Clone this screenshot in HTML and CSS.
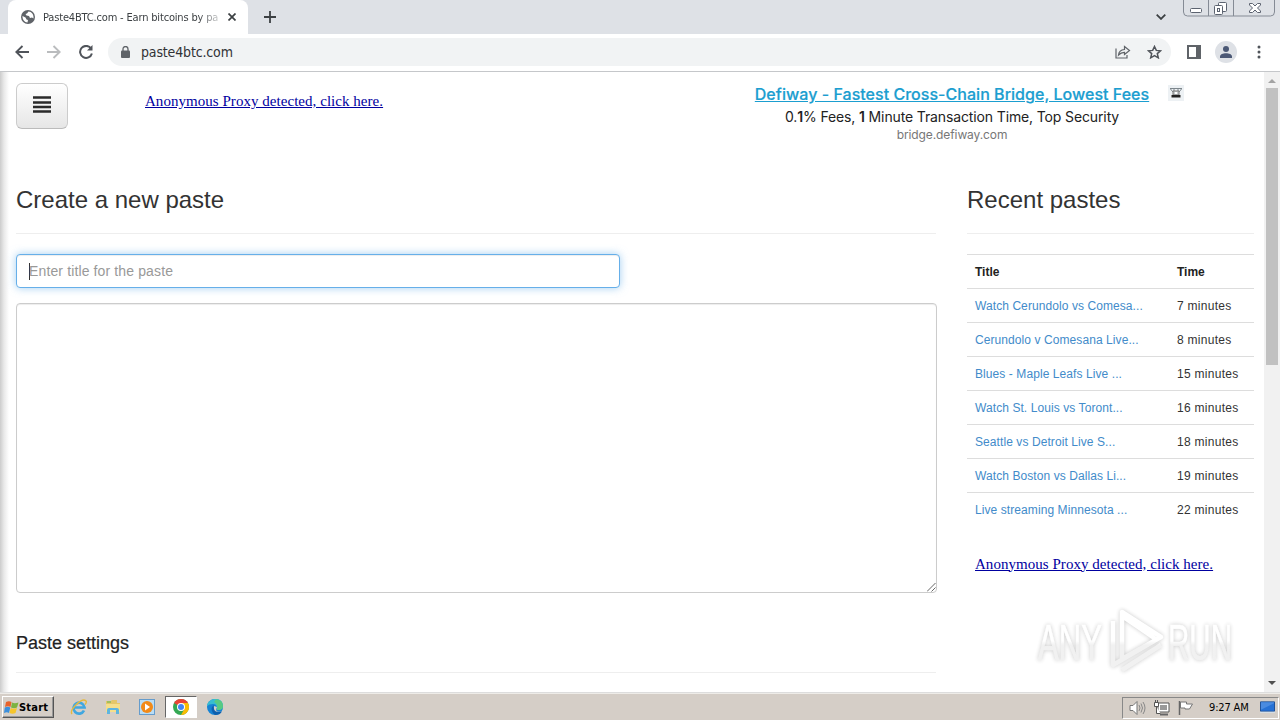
FILE: index.html
```html
<!DOCTYPE html>
<html lang="en">
<head>
<meta charset="utf-8">
<title>Paste4BTC.com - Earn bitcoins by pasting</title>
<link rel="stylesheet" href="styles.css">
</head>
<body>
<div class="screen">
  <header class="tabstrip">
    <div class="tab">
      <svg class="globe" width="14" height="14" viewBox="0 0 14 14"><circle cx="7" cy="7" r="7" fill="#5f6368"/><path d="M1.500 6l3 1.500 1 2 1.500.5-.5 2.500C3.500 12.500 1.300 9.500 1.500 6zM7.500 1.500L6 3.500 4.500 4l1 1.500L8 6l1 2 2-.5 1.500 1C13 4.500 10.500 1.500 7.500 1.500z" fill="#fff"/></svg>
      <span class="tab-title">Paste4BTC.com - Earn bitcoins by pa</span>
      <svg class="tab-close" width="8" height="8" viewBox="0 0 8 8"><path d="M.5.5l7 7M7.500.5l-7 7" stroke="#3c4043" stroke-width="1.700"/></svg>
    </div>
    <svg class="plus" width="12" height="12" viewBox="0 0 12 12"><path d="M6 0v12M0 6h12" stroke="#3c4043" stroke-width="1.800"/></svg>
    <svg class="chevron" width="10" height="6" viewBox="0 0 10 6"><path d="M.7.700L5 4.900 9.300.700" fill="none" stroke="#3c4043" stroke-width="1.800"/></svg>
    <svg class="window-buttons" width="94" height="18" viewBox="0 0 94 18"><path d="M1.500 0v12q0 4 4 4h83q4 0 4-4V0M26.500 0v16M51.500 0v16" fill="none" stroke="#858b95"/><g fill="#fff" stroke="#5c6370"><rect x="8.500" y="8.500" width="11" height="4" rx="1"/><rect x="36.500" y="2.500" width="8" height="9" rx="1"/><rect x="32.500" y="5.500" width="8" height="9" rx="1"/><rect x="35.500" y="8.500" width="2" height="3"/><path d="M67.500 3.500h3l2.500 2.500 2.500-2.500h3v1.500L75.500 8l3 3v1.500h-3L73 10l-2.500 2.500h-3V11l3-3-3-3z"/></g></svg>
  </header>
  <div class="toolbar">
    <svg class="back" width="14" height="14" viewBox="0 0 14 14"><path d="M14 7H1.500M7.500 1L1.300 7l6.200 6" fill="none" stroke="#50545a" stroke-width="1.900"/></svg>
    <svg class="forward" width="14" height="14" viewBox="0 0 14 14"><path d="M0 7h12.500M6.500 1l6.200 6-6.200 6" fill="none" stroke="#babcbe" stroke-width="1.900"/></svg>
    <svg class="reload" width="14" height="14" viewBox="0 0 14 14"><path d="M12 3.400A6 6 0 1 0 12.900 8.500" fill="none" stroke="#50545a" stroke-width="2"/><path d="M13.500 0v5.500H8z" fill="#50545a"/></svg>
    <div class="omnibox">
      <svg class="lock" width="9" height="12" viewBox="0 0 9 12"><rect y="4.500" width="9" height="7.500" rx="1" fill="#5f6368"/><path d="M2 5V3a2.500 2.500 0 0 1 5 0v2" fill="none" stroke="#5f6368" stroke-width="1.300"/></svg>
      <span class="url">paste4btc.com</span>
      <svg class="share" width="16" height="14" viewBox="0 0 16 14"><path d="M1 3.500v9.500h11v-3M3.500 10q.500-5 6-5.500V1.500L14.500 5.500l-5 4V7.300Q6 7.200 3.500 10z" fill="none" stroke="#5f6368" stroke-width="1.200"/></svg>
      <svg class="star" width="15" height="14" viewBox="0 0 15 14"><path d="M7.500 1.500l1.800 3.900 4.200.4-3.200 2.800 1 4.200-3.800-2.200-3.800 2.200 1-4.200L1.500 5.800l4.200-.4z" fill="none" stroke="#50545a" stroke-width="1.500"/></svg>
    </div>
    <svg class="panel" width="14" height="14" viewBox="0 0 14 14"><rect x="1" y="1" width="12" height="12" fill="#fff" stroke="#5f6368" stroke-width="2"/><path d="M9 1h4v12H9z" fill="#5f6368"/></svg>
    <svg class="avatar" width="22" height="22" viewBox="0 0 22 22"><circle cx="11" cy="11" r="11" fill="#dee1e6"/><circle cx="11" cy="8" r="3" fill="#4b5875"/><path d="M5 17v-1.500c0-4.500 12-4.500 12 0V17z" fill="#4b5875"/></svg>
    <svg class="dots" width="4" height="14" viewBox="0 0 4 14"><g fill="#50545a"><circle cx="2" cy="2" r="1.500"/><circle cx="2" cy="7" r="1.500"/><circle cx="2" cy="12" r="1.500"/></g></svg>
  </div>
  <div class="viewport">
    <div class="page">
      <div class="top">
        <div class="menu-button"><svg width="18" height="17" viewBox="0 0 18 17"><path d="M0 1.500h18M0 6.500h18M0 11h18M0 15.500h18" stroke="#2a2a2a" stroke-width="2.700"/></svg></div>
        <a class="proxy">Anonymous Proxy detected, click here.</a>
        <div class="ad">
          <a class="ad-title">Defiway - Fastest Cross-Chain Bridge, Lowest Fees</a>
          <span class="ad-text">0.<b>1</b>% Fees, <b>1</b> Minute Transaction Time, Top Security</span>
          <span class="ad-host">bridge.defiway.com</span>
        </div>
        <svg class="ad-badge" width="16" height="16" viewBox="0 0 16 16"><path d="M0 0h16v16H0z" fill="#edf1f4"/><path d="M2 3.500h12M2.500 4l2.500 3M13.500 4L11 7M6 4v4M10 4v4" fill="none" stroke="#7d868c"/><path d="M5 6h6v4H5z" fill="#c6cccf" stroke="#777"/><path d="M3.500 10h9v2.500h-9z" fill="#222"/><path d="M7 7h2v2H7z" fill="#fff"/></svg>
      </div>
      <div class="columns">
        <main class="create">
          <h2 class="heading heading-create">Create a new paste</h2>
          <div class="title-input"><i class="caret"></i><span>Enter title for the paste</span></div>
          <div class="textarea"><svg width="9" height="9" viewBox="0 0 9 9"><path d="M0 8.500L8.500 0M4.500 8.500l4-4" stroke="#666"/></svg></div>
          <h4 class="settings">Paste settings</h4>
        </main>
        <aside class="recent">
          <h2 class="heading heading-recent">Recent pastes</h2>
          <table class="pastes">
            <tr><th>Title</th><th>Time</th></tr>
            <tr><td><a>Watch Cerundolo vs Comesa...</a></td><td>7 minutes</td></tr>
            <tr><td><a>Cerundolo v Comesana Live...</a></td><td>8 minutes</td></tr>
            <tr><td><a>Blues - Maple Leafs Live ...</a></td><td>15 minutes</td></tr>
            <tr><td><a>Watch St. Louis vs Toront...</a></td><td>16 minutes</td></tr>
            <tr><td><a>Seattle vs Detroit Live S...</a></td><td>18 minutes</td></tr>
            <tr><td><a>Watch Boston vs Dallas Li...</a></td><td>19 minutes</td></tr>
            <tr><td><a>Live streaming Minnesota ...</a></td><td>22 minutes</td></tr>
          </table>
          <a class="proxy proxy-side">Anonymous Proxy detected, click here.</a>
        </aside>
      </div>
    </div>
    <div class="scrollbar">
      <svg width="8" height="4" viewBox="0 0 8 4"><path d="M0 4l4-4 4 4z" fill="#a3a3a3"/></svg>
      <div class="thumb"></div>
      <svg class="down" width="8" height="4" viewBox="0 0 8 4"><path d="M0 0l4 4 4-4z" fill="#505050"/></svg>
    </div>
  </div>
  <footer class="taskbar">
    <div class="start"><svg width="15" height="15" viewBox="0 0 15 15"><path d="M2 2q3-1.500 5.500 0L6.500 7Q4 5.500 1 7z" fill="#e8632c"/><path d="M8 2.500q2.500 1.500 6.500 0l-1.500 5q-3 1.500-6 0z" fill="#7cb342"/><path d="M.8 7.500q3-1.500 5.500 0L5 13Q3 11.500 0 13z" fill="#3c8fdc"/><path d="M6.700 8q2.500 1.500 6.300 0l-1.500 5q-3 1.500-6 0z" fill="#f6c52c"/></svg><span>Start</span></div>
    <div class="task"><svg width="18" height="17" viewBox="0 0 18 17"><path d="M14 11.500A5.500 5.500 0 1 1 14.500 8.500H5" fill="none" stroke="#40a7e0" stroke-width="2.700"/><path d="M2 15C-1 11 12-2 16 2q1 1-1 3.500" fill="none" stroke="#e5b93e" stroke-width="1.400"/></svg></div>
    <div class="task"><svg width="16" height="16" viewBox="0 0 16 16"><path d="M1 2h5l1-1h5v3h3v9H1z" fill="#e5c768"/><path d="M1 5h14v8H1z" fill="#f5df8b"/><path d="M2 3h4" stroke="#5cb657"/><path d="M2 15v-4q0-2 2-2h8q2 0 2 2v4h-3v-4H5v4z" fill="#5eb5df"/></svg></div>
    <div class="task"><svg width="16" height="16" viewBox="0 0 16 16"><rect x=".5" y=".5" width="15" height="15" fill="#b9ddf5" stroke="#659ccc"/><circle cx="8" cy="8" r="6" fill="#f28a18"/><path d="M6 4.500l5 3.500-5 3.500z" fill="#fff"/></svg></div>
    <div class="task active"><svg width="16" height="16" viewBox="0 0 16 16"><circle cx="8" cy="8" r="8" fill="#34a853"/><path d="M8 8L1.070 4A8 8 0 0 1 14.930 4z" fill="#ea4335"/><path d="M8 4h6.930A8 8 0 0 1 8 16l3.400-6z" fill="#fbbc04"/><circle cx="8" cy="8" r="4" fill="#fff"/><circle cx="8" cy="8" r="3" fill="#4285f4"/></svg></div>
    <div class="task"><svg width="16" height="16" viewBox="0 0 16 16"><circle cx="8" cy="8" r="8" fill="#1683d4"/><path d="M0 7C1-2 16-3 16 7q0 4-4.500 4-2.500 0-1.500-2 0-4-4-4Q2 5 0 7z" fill="#37bdd0"/><path d="M9 .2Q16 1 16 7q0 4-4.500 4-2.500 0-1.500-2 1-4-3-6z" fill="#57ca83"/><path d="M10 8q-3 6 5 4.500l.6-1.500L17 14H10Q5 12 7 7z" fill="#d5cec7"/><path d="M6.500 6Q2 11 8 16q5 0 7-3.500Q8 14 7 10z" fill="#0d5fae"/></svg></div>
    <div class="tray">
      <svg class="speaker" width="17" height="16" viewBox="0 0 17 16"><path d="M1 5.500h3l4-4v13l-4-4H1z" fill="#fff" stroke="#777"/><path d="M10 5q2 3 0 6M12 3.500q3 4.500 0 9M14 2q4 6 0 12" fill="none" stroke="#888"/></svg>
      <svg class="network" width="17" height="16" viewBox="0 0 17 16"><path d="M5 3h11v9H5z" fill="#fff" stroke="#555"/><path d="M7 5h7v5H7z" fill="#999"/><path d="M7 14.500h8" stroke="#666" stroke-width="2"/><path d="M1.500 2.500h4v4h-4zM3.500 6.500v7h4M2.500 0v2M4.500 0v2" fill="#fff" stroke="#555"/></svg>
      <svg class="flag" width="17" height="16" viewBox="0 0 17 16"><path d="M2.500 1v14" stroke="#666" stroke-width="1.500"/><path d="M3.500 2h6v2h6l-3 5H8V8H3.500z" fill="#fff" stroke="#777"/></svg>
      <span class="clock">9:27 AM</span>
      <svg class="desktop" width="15" height="13" viewBox="0 0 16 13"><path d="M.5.500h15v10H.5z" fill="#2671d5" stroke="#174a91"/><path d="M1 9L15 2v-1H1z" fill="#4a8be0"/><path d="M0 11.500h16" stroke="#d8e5f3"/></svg>
    </div>
  </footer>
  <svg class="watermark" width="220" height="80" viewBox="0 0 220 80">
    <defs><linearGradient id="fade" gradientUnits="userSpaceOnUse" x1="0" y1="18" x2="0" y2="58"><stop offset=".5" stop-color="#fff"/><stop offset=".6" stop-color="#efefef"/></linearGradient></defs>
    <g class="mark"><text x="8" y="57" textLength="64" lengthAdjust="spacingAndGlyphs">ANY</text><text x="138" y="57" textLength="64" lengthAdjust="spacingAndGlyphs">RUN</text>
    <g fill="none" stroke="url(#fade)" stroke-width="4.500" stroke-linejoin="round"><path d="M127 37L92 13v43l39-22L92 9v4M83 18v44l41-24M92 67l39-25"/></g></g>
  </svg>
</div>
</body>
</html>
```
FILE: styles.css
```css
* { box-sizing: border-box; }
body { margin: 0; font-family: "Liberation Sans", Arial, sans-serif; color: #333; }
svg { display: block; flex: none; }
.screen { position: relative; width: 1280px; height: 720px; overflow: hidden; display: flex; flex-direction: column; background: #fff; white-space: nowrap; }
.tabstrip { height: 34px; flex: none; background: #dee1e6; display: flex; align-items: flex-start; }
.tab { width: 240px; height: 34px; margin-left: 8px; padding: 0 12px 0 13px; background: #fff; border-radius: 8px 8px 0 0; display: flex; align-items: center; }
.tab-title { width: 176px; margin-left: 8px; overflow: hidden; font: 11px "DejaVu Sans Condensed", "DejaVu Sans", sans-serif; letter-spacing: -.17px; color: #3c4043; -webkit-mask-image: linear-gradient(90deg, #000 155px, transparent 182px); }
.tab-close { margin-left: 9px; }
.plus { margin: 11px 0 0 16px; }
.chevron { margin: 14px 0 0 auto; }
.window-buttons { margin: 0 4px 0 16px; }
.toolbar { height: 38px; flex: none; display: flex; align-items: center; padding: 0 19px 1px 15px; border-bottom: 1px solid #c5c7ca; }
.forward, .reload { margin-left: 18px; }
.omnibox { width: 1063px; height: 28px; margin-left: 15px; padding: 0 9px 0 13px; border-radius: 14px; background: #f1f3f4; display: flex; align-items: center; }
.url { margin-left: 11px; font: 14px "DejaVu Sans Condensed", sans-serif; letter-spacing: -.15px; color: #303236; }
.share { margin-left: auto; }
.star { margin-left: 16px; }
.panel { margin-left: 16px; }
.avatar { margin-left: 14px; }
.dots { margin-left: 20px; }
.viewport { height: 621px; flex: none; display: flex; border-bottom: 1px solid #ddd; }
.page { width: 1264px; padding: 11px 10px 0 16px; background: linear-gradient(90deg, #ccc 0, #e9e9e9 4px, #fff 9px); }
.top { height: 103px; display: flex; align-items: flex-start; }
.menu-button { width: 52px; height: 46px; padding-bottom: 3px; border: 1px solid #ccc; border-bottom-color: #bbb; border-radius: 6px; background: linear-gradient(#fff, #e6e6e6); display: flex; align-items: center; justify-content: center; }
.proxy { font: 15px/18px "Liberation Serif", serif; letter-spacing: .04px; color: #0000a0; text-decoration: underline; }
.top .proxy { width: 237px; margin: 9px 0 0 77px; }
.ad { width: 396px; margin-left: 372px; display: flex; flex-direction: column; align-items: center; font-family: Inter, sans-serif; }
.ad-title { font-size: 16px; line-height: 22px; font-weight: 500; letter-spacing: .03px; color: #1b9ed0; -webkit-text-stroke: .2px #1b9ed0; text-decoration: underline; }
.ad-text { font-size: 14px; line-height: 22px; letter-spacing: -.13px; color: #222; margin-top: 1px; }
.ad-text b { font-weight: 600; }
.ad-host { font-size: 12px; line-height: 14px; letter-spacing: -.1px; color: #777; }
.ad-badge { margin: 2px 0 0 18px; }
.columns { display: flex; justify-content: space-between; height: 505px; }
.create { width: 921px; }
.recent { width: 287px; }
.heading { height: 48px; margin: 0 0 20px; font-size: 24px; line-height: 28px; font-weight: 400; border-bottom: 1px solid #eee; }
.heading-create { width: 920px; }
.title-input { width: 604px; height: 34px; padding: 0 12px; border: 1px solid #66afe9; border-radius: 4px; box-shadow: inset 0 1px 1px rgba(0,0,0,.075), 0 0 8px rgba(102,175,233,.6); background: #fff; font-size: 14px; letter-spacing: .13px; color: #999; display: flex; align-items: center; }
.caret { width: 1px; height: 17px; margin-right: -1px; background: #333; }
.textarea { width: 921px; height: 290px; margin-top: 15px; border: 1px solid #ccc; border-radius: 4px; box-shadow: inset 0 1px 1px rgba(0,0,0,.075); background: #fff; display: flex; align-items: flex-end; justify-content: flex-end; }
.settings { width: 920px; height: 40px; margin: 40px 0 0; font-size: 18px; line-height: 20px; font-weight: 400; border-bottom: 1px solid #eee; color: #222; -webkit-text-stroke: .2px #222; }
.pastes { width: 287px; table-layout: fixed; border-collapse: collapse; font-size: 12px; letter-spacing: .28px; }
.pastes td, .pastes th { height: 34px; padding: 0 0 0 8px; border-top: 1px solid #ddd; text-align: left; }
.pastes th:first-child { width: 202px; }
.pastes th { letter-spacing: 0; color: #222; }
.pastes a { color: #428bca; letter-spacing: .08px; }
.proxy-side { display: block; margin: 28px 0 0 8px; }
.scrollbar { width: 16px; background: #f1f1f1; display: flex; flex-direction: column; align-items: center; padding-top: 7px; }
.thumb { width: 12px; height: 277px; margin-top: 5px; background: #c1c1c1; }
.down { margin: auto 0 7px; }
.taskbar { height: 27px; flex: none; background: #d5cec7; border-top: 1px solid #eeece8; display: flex; align-items: center; }
.start { width: 52px; height: 22px; margin: 0 9px 0 2px; padding-left: 1px; border: 1px solid #fff; border-right-color: #555; border-bottom-color: #555; box-shadow: inset -1px -1px #999; display: flex; align-items: center; font: bold 11px "DejaVu Sans Condensed", sans-serif; letter-spacing: .2px; color: #000; }
.task { width: 32px; height: 22px; margin-right: 2px; display: flex; align-items: center; justify-content: center; }
.active { background: #fff; border: 1px solid #666; border-right-color: #fff; border-bottom-color: #fff; }
.tray { width: 157px; height: 22px; margin: 1px 1px 0 auto; padding-left: 6px; border: 1px solid #888; border-right-color: #fff; border-bottom-color: #fff; display: flex; align-items: center; }
.network { margin-left: 7px; }
.flag { margin-left: 7px; }
.clock { width: 42px; margin-left: 15px; font: 11px "DejaVu Sans Condensed", sans-serif; letter-spacing: -.15px; color: #000; }
.desktop { margin-left: 9px; }
.watermark { position: absolute; left: 1030px; top: 603px; }
.mark { filter: drop-shadow(0 0 2px rgba(0,0,0,.25)); opacity: .85; }
.mark text { font: 50px "Liberation Sans", sans-serif; fill: url(#fade); stroke: url(#fade); stroke-width: .6px; }
```
